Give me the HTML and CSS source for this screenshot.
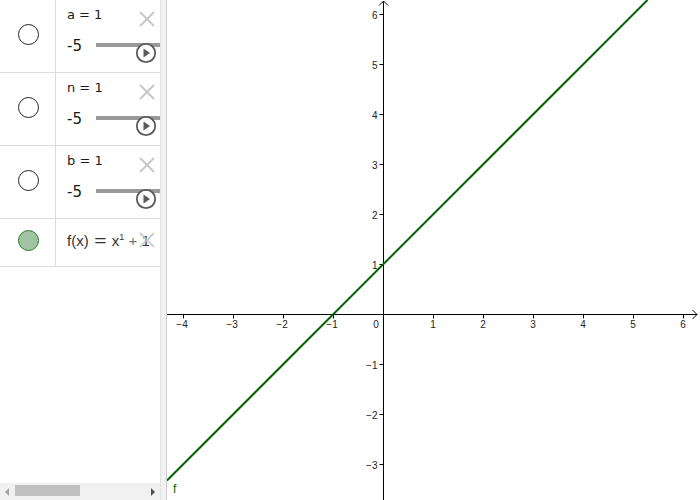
FILE: index.html
```html
<!DOCTYPE html>
<html>
<head>
<meta charset="utf-8">
<link rel="stylesheet" href="styles.css">
</head>
<body>
<div class="app">
  <div class="algebra">
    <div class="rows">
      <div class="row slider-row">
        <div class="marble-cell"><span class="marble"></span></div>
        <div class="content">
          <div class="def">a = 1</div>
          <div class="slider-line"><span class="min">-5</span><span class="track"></span></div>
          <span class="close"><svg viewBox="0 0 16 16" width="16" height="16"><path d="M1 1 L15 15 M15 1 L1 15"/></svg></span>
          <span class="play"><svg viewBox="0 0 22 22" width="22" height="22"><circle cx="11" cy="11" r="9.2"/><path d="M8.5 6.5 L15 11 L8.5 15.5 Z"/></svg></span>
        </div>
      </div>
      <div class="row slider-row">
        <div class="marble-cell"><span class="marble"></span></div>
        <div class="content">
          <div class="def">n = 1</div>
          <div class="slider-line"><span class="min">-5</span><span class="track"></span></div>
          <span class="close"><svg viewBox="0 0 16 16" width="16" height="16"><path d="M1 1 L15 15 M15 1 L1 15"/></svg></span>
          <span class="play"><svg viewBox="0 0 22 22" width="22" height="22"><circle cx="11" cy="11" r="9.2"/><path d="M8.5 6.5 L15 11 L8.5 15.5 Z"/></svg></span>
        </div>
      </div>
      <div class="row slider-row">
        <div class="marble-cell"><span class="marble"></span></div>
        <div class="content">
          <div class="def">b = 1</div>
          <div class="slider-line"><span class="min">-5</span><span class="track"></span></div>
          <span class="close"><svg viewBox="0 0 16 16" width="16" height="16"><path d="M1 1 L15 15 M15 1 L1 15"/></svg></span>
          <span class="play"><svg viewBox="0 0 22 22" width="22" height="22"><circle cx="11" cy="11" r="9.2"/><path d="M8.5 6.5 L15 11 L8.5 15.5 Z"/></svg></span>
        </div>
      </div>
      <div class="row func-row">
        <div class="marble-cell"><span class="marble filled"></span></div>
        <div class="content">
          <div class="formula">f(x) <span class="eq">=</span> x<sup>1</sup> <span class="plus">+</span> 1</div>
          <span class="close fclose"><svg viewBox="0 0 16 16" width="16" height="16"><path d="M1 1 L15 15 M15 1 L1 15"/></svg></span>
        </div>
      </div>
    </div>
    <div class="hscroll">
      <span class="arrow-left"></span>
      <span class="thumb"></span>
      <span class="arrow-right"></span>
    </div>
  </div>
  <div class="splitter"></div>
  <div class="graphics">
    <svg class="plot" viewBox="167 0 533 500" width="533" height="500">
      <g class="axes">
        <line x1="167" y1="314.5" x2="697" y2="314.5"/>
        <polyline class="arrowhead" points="692.5,310 697,314.5 692.5,319"/>
        <line x1="383.5" y1="1" x2="383.5" y2="500"/>
        <polyline class="arrowhead" points="379,5.5 383.5,1 388,5.5"/>
        <path d="M183.5 314.5 V318.5 M233.5 314.5 V318.5 M283.5 314.5 V318.5 M333.5 314.5 V318.5 M433.5 314.5 V318.5 M483.5 314.5 V318.5 M533.5 314.5 V318.5 M583.5 314.5 V318.5 M633.5 314.5 V318.5 M683.5 314.5 V318.5"/>
        <path d="M379.5 14.5 H383.5 M379.5 64.5 H383.5 M379.5 114.5 H383.5 M379.5 164.5 H383.5 M379.5 214.5 H383.5 M379.5 264.5 H383.5 M379.5 364.5 H383.5 M379.5 414.5 H383.5 M379.5 464.5 H383.5"/>
      </g>
      <g class="xlabels">
        <text x="182" y="328">−4</text>
        <text x="232" y="328">−3</text>
        <text x="282" y="328">−2</text>
        <text x="332" y="328">−1</text>
        <text x="376" y="328">0</text>
        <text x="433" y="328">1</text>
        <text x="483" y="328">2</text>
        <text x="533" y="328">3</text>
        <text x="583" y="328">4</text>
        <text x="633" y="328">5</text>
        <text x="683" y="328">6</text>
      </g>
      <g class="ylabels">
        <text x="377.5" y="18.5">6</text>
        <text x="377.5" y="68.5">5</text>
        <text x="377.5" y="118.5">4</text>
        <text x="377.5" y="168.5">3</text>
        <text x="377.5" y="218.5">2</text>
        <text x="377.5" y="268.5">1</text>
        <text x="377.5" y="368.5">−1</text>
        <text x="377.5" y="418.5">−2</text>
        <text x="377.5" y="468.5">−3</text>
      </g>
      <line class="fline" x1="167" y1="480.5" x2="647.5" y2="0"/>
      <text class="flabel" x="173" y="493">f</text>
    </svg>
  </div>
</div>
</body>
</html>
```

FILE: styles.css
```css
html, body {
  margin: 0;
  padding: 0;
  background: #fff;
}
body {
  width: 700px;
  height: 500px;
  overflow: hidden;
  font-family: "DejaVu Sans", "Liberation Sans", sans-serif;
  color: #1a1a1a;
}
.app {
  display: flex;
  width: 700px;
  height: 500px;
}
.algebra {
  width: 160px;
  height: 500px;
  display: flex;
  flex-direction: column;
  overflow: hidden;
  flex: none;
}
.rows {
  flex: 1;
  display: flex;
  flex-direction: column;
}
.row {
  display: flex;
  box-sizing: border-box;
  border-bottom: 1px solid #dcdcdc;
}
.slider-row {
  height: 73px;
}
.func-row {
  height: 48px;
}
.marble-cell {
  width: 56px;
  flex: none;
  box-sizing: border-box;
  border-right: 1px solid #dcdcdc;
  display: flex;
  justify-content: center;
  align-items: flex-start;
  padding-left: 1px;
}
.slider-row .marble-cell {
  padding-top: 24px;
}
.func-row .marble-cell {
  padding-top: 11px;
}
.marble {
  width: 19px;
  height: 19px;
  border-radius: 50%;
  border: 1px solid #222;
  background: #fff;
}
.marble.filled {
  background: #a2c3a2;
  border-color: #2a7a2a;
}
.content {
  flex: 1;
  position: relative;
  padding-left: 11px;
  overflow: hidden;
}
.def {
  padding-top: 6px;
  font-size: 13px;
  line-height: 18px;
  white-space: nowrap;
}
.slider-line {
  display: flex;
  align-items: flex-start;
  margin-top: 12px;
  font-size: 15px;
  line-height: 20px;
}
.min {
  width: 29px;
  flex: none;
}
.track {
  flex: 1;
  height: 4px;
  margin-top: 7px;
  background: #999;
}
.close {
  position: absolute;
  top: 11px;
  right: 5px;
  width: 16px;
  height: 16px;
}
.close svg {
  display: block;
  stroke: #c6c6c6;
  stroke-width: 1.8;
  fill: none;
}
.fclose {
  top: 13px;
  opacity: 0.85;
}
.play {
  position: absolute;
  top: 42px;
  right: 3px;
  width: 22px;
  height: 22px;
}
.play svg {
  display: block;
}
.play circle {
  fill: #fff;
  stroke: #5a5a5a;
  stroke-width: 1.8;
}
.play path {
  fill: #5a5a5a;
}
.formula {
  padding-top: 12px;
  font-family: "Liberation Sans", "DejaVu Sans", sans-serif;
  font-size: 15px;
  line-height: 20px;
  color: #333;
  white-space: nowrap;
}
.formula .eq {
  display: inline-block;
  transform: scaleX(1.4);
  margin: 0 3px;
}
.formula .plus {
  color: #777;
}
.formula sup {
  font-size: 9px;
  vertical-align: 6px;
  line-height: 0;
}
.hscroll {
  height: 17px;
  background: #f1f1f1;
  position: relative;
  display: flex;
  align-items: flex-start;
  flex: none;
}
.arrow-left {
  width: 0;
  height: 0;
  margin: 5px 0 0 5px;
  border-top: 4px solid transparent;
  border-bottom: 4px solid transparent;
  border-right: 4px solid #a3a3a3;
}
.thumb {
  width: 65px;
  height: 11px;
  margin: 2px 0 0 6px;
  background: #c1c1c1;
}
.arrow-right {
  width: 0;
  height: 0;
  margin: 5px 0 0 auto;
  margin-right: 5px;
  border-top: 4px solid transparent;
  border-bottom: 4px solid transparent;
  border-left: 4px solid #505050;
}
.splitter {
  width: 7px;
  height: 500px;
  box-sizing: border-box;
  flex: none;
  background: #f2f2f2;
  border-left: 1px solid #e2e2e2;
  border-right: 1px solid #cfcfcf;
}
.graphics {
  flex: 1;
  height: 500px;
  overflow: hidden;
}
.plot {
  display: block;
}
.axes line, .axes path {
  stroke: #000;
  stroke-width: 1;
  fill: none;
}
.axes .arrowhead {
  stroke: #000;
  stroke-width: 1;
  fill: none;
}
.xlabels text, .ylabels text {
  font-family: "Liberation Sans", Arial, sans-serif;
  font-size: 10px;
  fill: #222;
}
.xlabels text {
  text-anchor: middle;
}
.ylabels text {
  text-anchor: end;
}
.fline {
  stroke: #006400;
  stroke-width: 2;
}
.flabel {
  font-family: "Liberation Sans", Arial, sans-serif;
  font-size: 12px;
  fill: #006400;
}
```
